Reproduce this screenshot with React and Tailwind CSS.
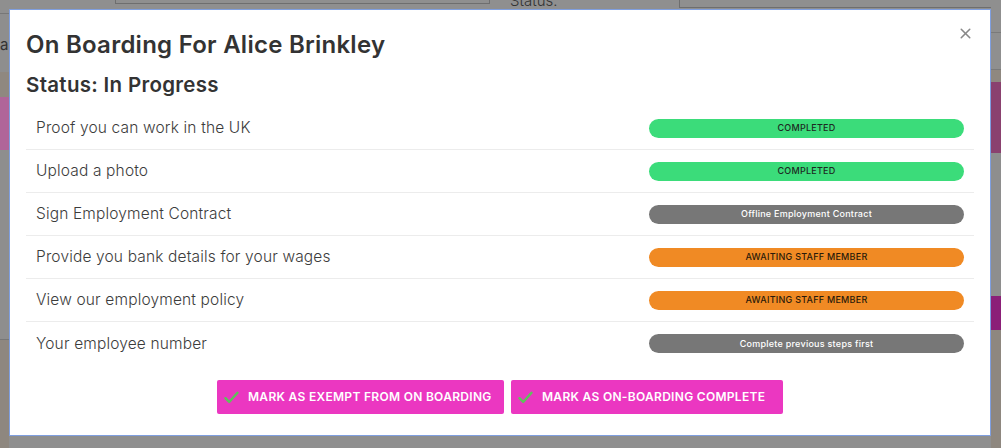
import { X } from "lucide-react";

const STEPS = [
  { label: "Proof you can work in the UK", status: "COMPLETED", tone: "green" },
  { label: "Upload a photo", status: "COMPLETED", tone: "green" },
  { label: "Sign Employment Contract", status: "Offline Employment Contract", tone: "gray" },
  { label: "Provide you bank details for your wages", status: "AWAITING STAFF MEMBER", tone: "orange" },
  { label: "View our employment policy", status: "AWAITING STAFF MEMBER", tone: "orange" },
  { label: "Your employee number", status: "Complete previous steps first", tone: "gray" },
];

const TONES = {
  green: "bg-[#3bdc7a] text-[#1d2a22] font-medium",
  orange: "bg-[#f08a24] text-[#2a1a0a] font-medium",
  gray: "bg-[#777777] text-white font-medium",
};

const Check = () => (
  <svg width="15" height="13" viewBox="0 0 15 13" className="shrink-0">
    <path d="M1.5 7.2 L5.2 11 L13.5 1.8" fill="none" stroke="#5cc35a" strokeWidth="2.4" strokeLinecap="round" strokeLinejoin="round" />
  </svg>
);

const StepRow = ({ step, last }) => (
  <div className={`flex items-center justify-between h-[43px] pl-[10px] pr-[10px] ${last ? "" : "border-b border-[#ececec]"}`}>
    <span className="text-[15.5px] tracking-[0.15px] text-[#3c3c3c] font-light">{step.label}</span>
    <span className={`w-[315px] h-[19px] rounded-full flex items-center justify-center text-[9px] tracking-[0.25px] ${TONES[step.tone]}`}>
      {step.status}
    </span>
  </div>
);

export default function App() {
  return (
    <div className="relative w-[1001px] h-[448px] overflow-hidden bg-[#8f8f8f] font-['Inter',sans-serif]">
      <div className="grid grid-cols-[9px_1fr_10px] h-full">
        <div className="flex flex-col">
          <div className="h-[14px] border-b border-[#777]" />
          <div className="h-[58px] bg-[#8e8e8e] text-[15px] text-[#333] pt-[20px] overflow-hidden">a</div>
          <div className="h-[25px] bg-[#8f8880]" />
          <div className="h-[53px] bg-[#b06599]" />
          <div className="h-[190px] bg-[#8e8e8e] border-b border-[#777]" />
          <div className="flex-1 bg-[#8e877f]" />
        </div>
        <div className="flex items-start">
          <div className="ml-[106px] w-[375px] h-[4px] border border-t-0 border-[#6e6e6e] bg-[#8f8f8f]" />
          <div className="ml-[20px] -mt-[8px] text-[15px] leading-[18px] font-light text-[#333]">Status:</div>
          <div className="ml-auto w-[312px] h-[8px] border border-t-0 border-r-0 border-[#6e6e6e]" />
        </div>
        <div className="flex flex-col">
          <div className="h-[33px] border-b border-[#7a7a7a]" />
          <div className="h-[37px] border-b border-[#7a7a7a]" />
          <div className="h-[12px] bg-[#8f8880]" />
          <div className="h-[71px] bg-[#8a416f]" />
          <div className="h-[143px] bg-[#8e8e8e]" />
          <div className="h-[34px] bg-[#8b1f78]" />
          <div className="flex-1 bg-[#8e877f]" />
        </div>
      </div>

      <div className="absolute left-[9px] top-[9px] w-[982px] h-[427px] bg-white border border-[#7f9fe0] px-[16px] pt-[18px]">
        <button className="absolute right-[16px] top-[15px] text-[#888]">
          <X size={17} strokeWidth={2.2} />
        </button>
        <h1 className="text-[24px] tracking-[0.25px] font-semibold text-[#333] leading-[34px]">On Boarding For Alice Brinkley</h1>
        <h2 className="mt-[9px] text-[20.5px] tracking-[0.3px] font-semibold text-[#333] leading-[28px]">Status: In Progress</h2>
        <div className="mt-[8px] flex flex-col">
          {STEPS.map((step, i) => (
            <StepRow key={i} step={step} last={i === STEPS.length - 1} />
          ))}
        </div>
        <div className="mt-[15px] flex justify-center gap-[7px]">
          <button className="h-[34px] w-[287px] bg-[#eb37c1] rounded-[2px] flex items-center gap-[9px] pl-[7px] text-white text-[12px] font-semibold tracking-[0.3px] whitespace-nowrap">
            <Check />
            MARK AS EXEMPT FROM ON BOARDING
          </button>
          <button className="h-[34px] w-[272px] bg-[#eb37c1] rounded-[2px] flex items-center gap-[9px] pl-[7px] text-white text-[12px] font-semibold tracking-[0.3px] whitespace-nowrap">
            <Check />
            MARK AS ON-BOARDING COMPLETE
          </button>
        </div>
      </div>
    </div>
  );
}
